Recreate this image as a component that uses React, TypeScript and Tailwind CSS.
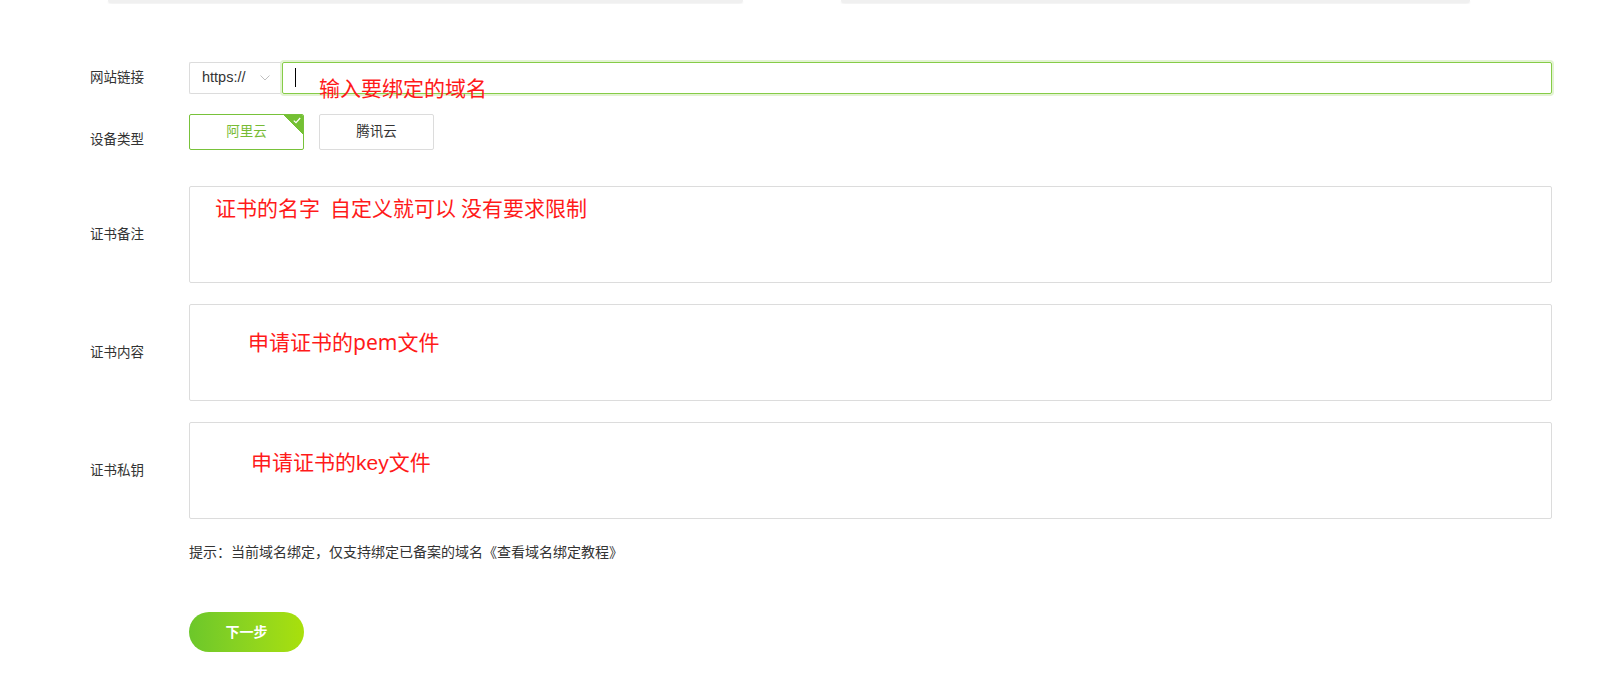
import { useState } from "react";

const labelCls = "w-[99px] shrink-0 text-[13.5px] leading-[20px] text-[#333]";
const boxCls = "relative flex-1 h-[97px] border border-[#dcdcdc] rounded-[2px] bg-white";
const noteCls = "absolute text-[21px] leading-[21px] text-[#ff1a1a] whitespace-nowrap pointer-events-none";

export default function App() {
  const [vendor, setVendor] = useState<"ali" | "tx">("ali");

  return (
    <div className="min-h-screen bg-white font-['Liberation_Sans','Noto_Sans_CJK_SC',sans-serif] text-[#333]">
      {/* 上方卡片的底边 */}
      <div className="flex h-[4px] overflow-hidden">
        <div className="ml-[108px] w-[635px] h-[3px] rounded-b-full bg-[#f0f0f0] shadow-[0_1px_2px_rgba(0,0,0,0.06)]" />
        <div className="ml-[98px] w-[629px] h-[3px] rounded-b-full bg-[#f0f0f0] shadow-[0_1px_2px_rgba(0,0,0,0.06)]" />
      </div>

      <div className="pl-[90px] pr-[67px] pt-[58px]">
        {/* 网站链接 */}
        <div className="flex items-center h-[32px]">
          <div className={labelCls}>网站链接</div>
          <div className="flex flex-1 h-[32px]">
            <div className="w-[93px] shrink-0 flex items-center justify-between pl-[12px] pr-[12px] border border-[#dcdcdc] border-r-0 rounded-l-[2px] text-[14.5px] text-[#333]">
              <span>https://</span>
              <svg width="10" height="6" viewBox="0 0 10 6" fill="none">
                <path d="M0.5 0.5 L5 5 L9.5 0.5" stroke="#c0c0c0" strokeWidth="1" />
              </svg>
            </div>
            <div className="relative flex-1 border border-[#86cc47] rounded-[2px] shadow-[0_0_0_2px_#e3f3d3]">
              <input className="w-full h-full outline-none bg-transparent px-[12px] text-[13.5px]" />
              <span className="absolute left-[12px] top-[5px] w-[1px] h-[19px] bg-black" />
              <span className={noteCls + " left-[36px] top-[15px]"}>输入要绑定的域名</span>
            </div>
          </div>
        </div>

        {/* 设备类型 */}
        <div className="flex items-start mt-[20px]">
          <div className={labelCls + " pt-[16px]"}>设备类型</div>
          <div className="flex gap-[15px]">
            <button
              onClick={() => setVendor("ali")}
              className={`relative overflow-hidden w-[115px] h-[36px] rounded-[2px] border text-[13.5px] ${
                vendor === "ali" ? "border-[#78c23a] text-[#78bb34]" : "border-[#dcdcdc] text-[#333]"
              }`}
            >
              阿里云
              {vendor === "ali" && (
                <span className="absolute right-0 top-0 w-[20px] h-[20px] bg-[linear-gradient(225deg,#74c033_50%,transparent_50%)]">
                  <svg className="absolute right-[2px] top-[2px]" width="8" height="7" viewBox="0 0 8 7" fill="none">
                    <path d="M0.8 3.6 L3 5.6 L7.2 1" stroke="white" strokeWidth="1.2" />
                  </svg>
                </span>
              )}
            </button>
            <button
              onClick={() => setVendor("tx")}
              className={`relative overflow-hidden w-[115px] h-[36px] rounded-[2px] border text-[13.5px] ${
                vendor === "tx" ? "border-[#78c23a] text-[#78bb34]" : "border-[#dcdcdc] text-[#333]"
              }`}
            >
              腾讯云
              {vendor === "tx" && (
                <span className="absolute right-0 top-0 w-[20px] h-[20px] bg-[linear-gradient(225deg,#74c033_50%,transparent_50%)]">
                  <svg className="absolute right-[2px] top-[2px]" width="8" height="7" viewBox="0 0 8 7" fill="none">
                    <path d="M0.8 3.6 L3 5.6 L7.2 1" stroke="white" strokeWidth="1.2" />
                  </svg>
                </span>
              )}
            </button>
          </div>
        </div>

        {/* 证书备注 */}
        <div className="flex items-center mt-[36px]">
          <div className={labelCls}>证书备注</div>
          <div className={boxCls}>
            <span className={noteCls + " left-[25px] top-[11px]"}>
              证书的名字<span className="ml-[10px]">自定义就可以</span>
              <span className="ml-[5px]">没有要求限制</span>
            </span>
          </div>
        </div>

        {/* 证书内容 */}
        <div className="flex items-center mt-[21px]">
          <div className={labelCls}>证书内容</div>
          <div className={boxCls}>
            <span className={noteCls + " left-[58px] top-[27px]"}>申请证书的<span className="font-['Noto_Sans',sans-serif]">pem</span>文件</span>
          </div>
        </div>

        {/* 证书私钥 */}
        <div className="flex items-center mt-[21px]">
          <div className={labelCls}>证书私钥</div>
          <div className={boxCls}>
            <span className={noteCls + " left-[61px] top-[29px]"}>申请证书的key文件</span>
          </div>
        </div>

        <div className="pl-[99px] mt-[23px] text-[14px] leading-[20px] text-[#333]">
          提示：当前域名绑定，仅支持绑定已备案的域名《查看域名绑定教程》
        </div>

        <div className="pl-[99px] mt-[50px]">
          <button className="w-[115px] h-[40px] rounded-full bg-gradient-to-r from-[#6cc72a] to-[#a9e00a] text-white text-[14px] font-semibold">
            下一步
          </button>
        </div>
      </div>
    </div>
  );
}
